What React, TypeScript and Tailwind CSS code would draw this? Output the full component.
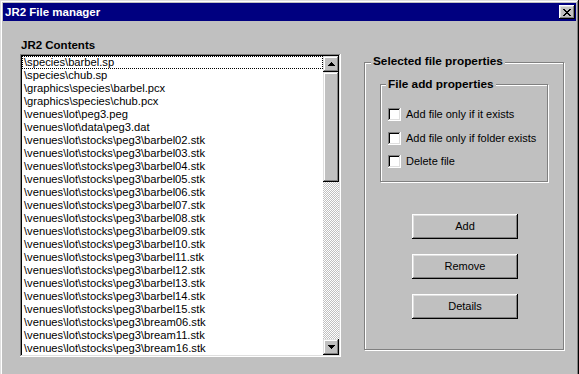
import * as React from "react"

const raised =
  "shadow-[inset_-1px_-1px_0_#000,inset_1px_1px_0_#fff,inset_-2px_-2px_0_#808080,inset_2px_2px_0_#dfdfdf]"
const scrollRaised =
  "shadow-[inset_-1px_-1px_0_#000,inset_1px_1px_0_#dfdfdf,inset_-2px_-2px_0_#808080,inset_2px_2px_0_#fff]"
const sunken =
  "shadow-[inset_-1px_-1px_0_#fff,inset_1px_1px_0_#808080,inset_-2px_-2px_0_#dfdfdf,inset_2px_2px_0_#000]"

const stocks = [
  "barbel02", "barbel03", "barbel04", "barbel05", "barbel06", "barbel07", "barbel08",
  "barbel09", "barbel10", "barbel11", "barbel12", "barbel13", "barbel14", "barbel15",
  "bream06", "bream11", "bream16",
]

const files = [
  "\\species\\barbel.sp",
  "\\species\\chub.sp",
  "\\graphics\\species\\barbel.pcx",
  "\\graphics\\species\\chub.pcx",
  "\\venues\\lot\\peg3.peg",
  "\\venues\\lot\\data\\peg3.dat",
  ...stocks.map((s) => `\\venues\\lot\\stocks\\peg3\\${s}.stk`),
]

const CloseGlyph = () => (
  <svg width="8" height="7" viewBox="0 0 8 7" shapeRendering="crispEdges">
    <path
      fill="#000"
      d="M0 0h2v1H0z M6 0h2v1H6z M1 1h2v1H1z M5 1h2v1H5z M2 2h4v1H2z M3 3h2v1H3z M2 4h4v1H2z M1 5h2v1H1z M5 5h2v1H5z M0 6h2v1H0z M6 6h2v1H6z"
    />
  </svg>
)

const Arrow: React.FC<{ down?: boolean }> = ({ down }) => (
  <svg width="7" height="4" viewBox="0 0 7 4" shapeRendering="crispEdges">
    <path
      fill="#000"
      d={down ? "M0 0h7v1H0z M1 1h5v1H1z M2 2h3v1H2z M3 3h1v1H3z" : "M3 0h1v1H3z M2 1h3v1H2z M1 2h5v1H1z M0 3h7v1H0z"}
    />
  </svg>
)

const TitleBar = () => (
  <div className="h-[18px] bg-[#000080] flex items-center justify-between pl-[2px] pr-[1px]">
    <span className="text-white font-bold text-[11.5px] leading-[13px]">JR2 File manager</span>
    <div className={`w-[16px] h-[14px] bg-[#c0c0c0] flex items-center justify-center pt-px ${raised}`}>
      <CloseGlyph />
    </div>
  </div>
)

const ScrollBar = () => (
  <div className="w-[16px] flex flex-col">
    <div className={`h-[16px] bg-[#c0c0c0] flex items-center justify-center ${scrollRaised}`}>
      <Arrow />
    </div>
    <div className={`h-[110px] bg-[#c0c0c0] ${scrollRaised}`} />
    <div className="flex-1 bg-[image:repeating-conic-gradient(#fff_0_25%,#c0c0c0_0_50%)] bg-[length:2px_2px]" />
    <div className={`h-[16px] bg-[#c0c0c0] flex items-center justify-center ${scrollRaised}`}>
      <Arrow down />
    </div>
  </div>
)

const ListBox = () => (
  <div className={`w-[321px] h-[303px] p-[2px] bg-white flex ${sunken}`}>
    <div className="w-[301px] flex flex-col overflow-hidden">
      {files.map((f, i) => (
        <div
          key={f}
          className={`h-[13px] leading-[13px] pl-[2px] text-[11.2px] whitespace-nowrap ${
            i === 0 ? "outline-1 outline-dotted outline-black -outline-offset-1" : ""
          }`}
        >
          {f}
        </div>
      ))}
    </div>
    <ScrollBar />
  </div>
)

const GroupLabel: React.FC<{ children: React.ReactNode; top: string }> = ({ children, top }) => (
  <span
    className={`absolute ${top} bg-[#c0c0c0] px-[2px] font-bold text-[11.8px] leading-[13px] whitespace-nowrap`}
  >
    {children}
  </span>
)

const CheckRow: React.FC<{ label: string; className?: string }> = ({ label, className }) => (
  <div className={`h-[13px] flex items-center gap-[5px] ${className ?? ""}`}>
    <div className={`w-[13px] h-[13px] bg-white ${sunken}`} />
    <span className="text-[11px] leading-[13px] whitespace-nowrap">{label}</span>
  </div>
)

const PushButton: React.FC<{ label: string }> = ({ label }) => (
  <div className={`w-[106px] h-[25px] bg-[#c0c0c0] flex items-center justify-center text-[11px] leading-[13px] ${raised}`}>
    {label}
  </div>
)

export default function App() {
  return (
    <div className="w-[579px] h-[374px] overflow-hidden bg-[#c0c0c0] text-black font-['Liberation_Sans',Arial,sans-serif]">
      <div className="h-[400px] p-[3px] shadow-[inset_-1px_-1px_0_#000,inset_1px_1px_0_#dfdfdf,inset_-2px_-2px_0_#808080,inset_2px_2px_0_#fff]">
        <TitleBar />

        <div className="flex pt-[18px] pl-[17px]">
          {/* Left: archive contents */}
          <div className="flex flex-col">
            <div className="text-[11.5px] font-bold leading-[13px] mb-[2px] pl-px">JR2 Contents</div>
            <ListBox />
          </div>

          {/* Right: properties */}
          <div className="ml-[23px] mt-[23px]">
            <div className="relative w-[200px] h-[288px] border border-[#808080] shadow-[inset_1px_1px_0_#fff,1px_1px_0_#fff] pt-[21px] pl-[15px] flex flex-col">
              <GroupLabel top="-top-[8px] left-[6px]">Selected file properties</GroupLabel>

              <div className="relative w-[168px] h-[98px] border border-[#808080] shadow-[inset_1px_1px_0_#fff,1px_1px_0_#fff] pt-[23px] pl-[7px] flex flex-col">
                <GroupLabel top="-top-[7px] left-[5px]">File add properties</GroupLabel>
                <CheckRow label="Add file only if it exists" />
                <CheckRow label="Add file only if folder exists" className="mt-[11px]" />
                <CheckRow label="Delete file" className="mt-[10px]" />
              </div>

              <div className="ml-[32px] mt-[32px] flex flex-col gap-[15px]">
                <PushButton label="Add" />
                <PushButton label="Remove" />
                <PushButton label="Details" />
              </div>
            </div>
          </div>
        </div>
      </div>
    </div>
  )
}
